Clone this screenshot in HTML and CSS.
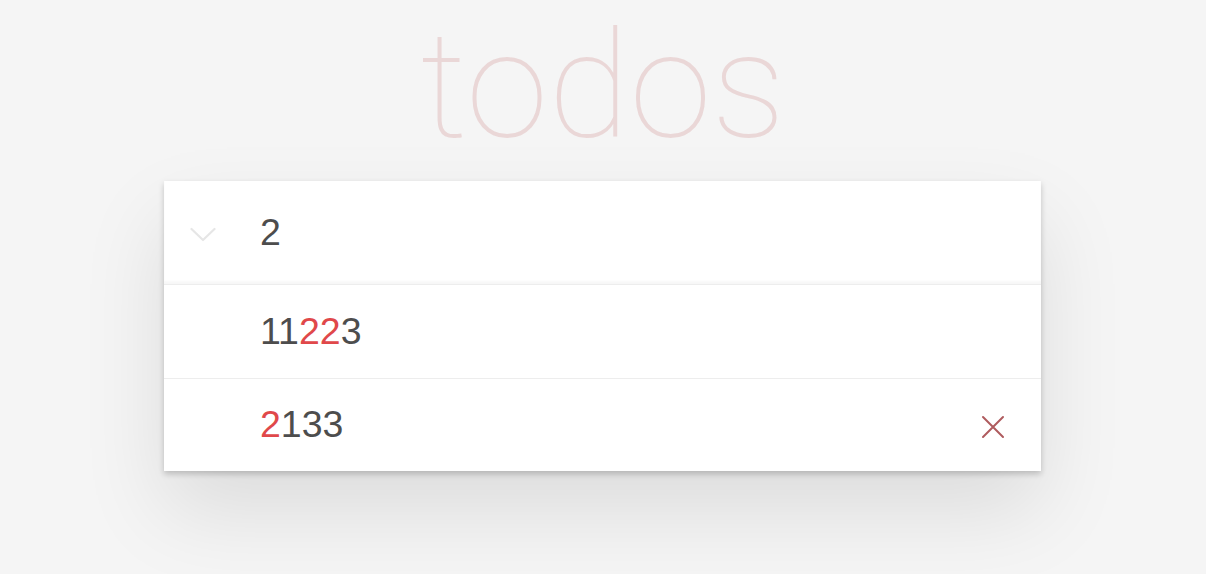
FILE: index.html
```html
<!DOCTYPE html>
<html lang="en">
<head>
<meta charset="utf-8">
<title>todos</title>
<link rel="stylesheet" href="styles.css">
</head>
<body>
<section class="app">
  <h1 class="title">todos</h1>
  <div class="panel">
    <div class="head">
      <span class="toggle">
        <svg width="26" height="16" viewBox="0 0 26 16"><polyline points="1.5,2 13,13 24.5,2" fill="none" stroke="#e6e6e6" stroke-width="2.2" stroke-linecap="round" stroke-linejoin="round"/></svg>
      </span>
      <span class="query">2</span>
    </div>
    <ul class="list">
      <li class="item"><span class="label">11<span class="match">22</span>3</span></li>
      <li class="item"><span class="label"><span class="match">2</span>133</span>
        <span class="destroy">
          <svg width="24" height="24" viewBox="0 0 24 24"><path d="M2 2 L22 22 M22 2 L2 22" stroke="#af5b5e" stroke-width="2" stroke-linecap="round" fill="none"/></svg>
        </span>
      </li>
    </ul>
  </div>
</section>
</body>
</html>
```
FILE: styles.css
```css
html, body {
  margin: 0;
  padding: 0;
}
body {
  background: #f5f5f5;
  font-family: "Liberation Sans", Arial, sans-serif;
  color: #4d4d4d;
  height: 574px;
  overflow: hidden;
}
.app {
  width: 878px;
  margin: 0 auto;
}
.title {
  margin: 0;
  height: 181px;
  box-sizing: border-box;
  padding-bottom: 9px;
  text-align: center;
  font-family: Roboto, "Liberation Sans", sans-serif;
  font-weight: 100;
  font-size: 149px;
  line-height: 172px;
  color: rgba(175, 47, 47, 0.15);
}
.panel {
  width: 877px;
  background: #fff;
  box-shadow: 0 3px 6px 0 rgba(0, 0, 0, 0.2), 0 40px 80px 0 rgba(0, 0, 0, 0.1);
}
.head {
  height: 103px;
  border-bottom: 1px solid #ededed;
  box-shadow: inset 0 -3px 2px rgba(0, 0, 0, 0.03);
  display: flex;
  align-items: center;
}
.toggle {
  width: 96px;
  display: flex;
  justify-content: flex-start;
  padding-left: 26px;
  box-sizing: border-box;
  margin-top: 4px;
}
.query, .label {
  font-size: 37.5px;
  line-height: 1;
}
.list {
  list-style: none;
  margin: 0;
  padding: 0;
}
.item {
  display: flex;
  align-items: center;
  padding-left: 96px;
  height: 93px;
  border-bottom: 1px solid #ededed;
}
.item:last-child {
  height: 92px;
  border-bottom: none;
}
.label {
  flex: 1;
}
.match {
  color: #e0484a;
}
.destroy {
  width: 24px;
  height: 24px;
  margin-right: 36px;
  margin-top: 4px;
  display: flex;
}
```
